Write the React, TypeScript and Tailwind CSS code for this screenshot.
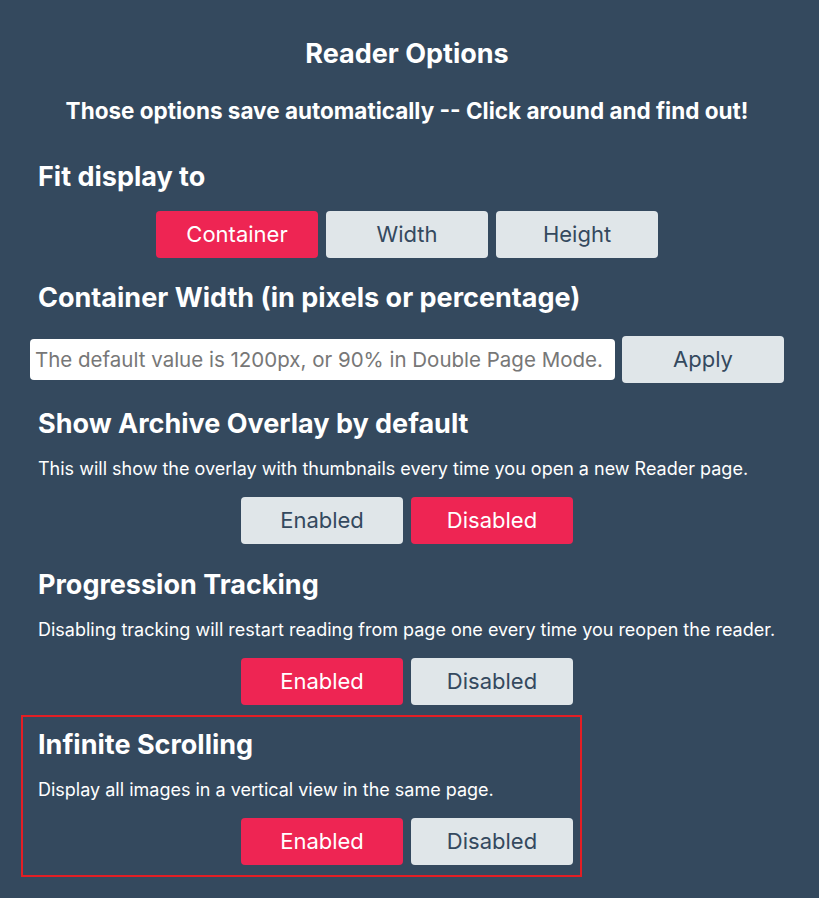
import React from "react";

const font = { fontFamily: "Inter, 'Noto Sans', sans-serif" };

function Toggle({ options, active }: { options: string[]; active: number }) {
  return (
    <div className="flex justify-center gap-2">
      {options.map((o, i) => (
        <button
          key={o}
          className={
            "h-[47px] w-[162px] rounded-[4px] text-[22px] " +
            (i === active ? "bg-[#ee2553] text-white" : "bg-[#e0e6e9] text-[#34495e]")
          }
        >
          {o}
        </button>
      ))}
    </div>
  );
}

function Section({
  title,
  desc,
  active,
}: {
  title: string;
  desc: string;
  active: number;
}) {
  return (
    <div>
      <h2 className="pl-[38px] text-[27px] font-bold leading-8 text-white">{title}</h2>
      <p className="mt-[17px] pl-[38px] text-[18px] leading-6 text-white">{desc}</p>
      <div className="mt-4">
        <Toggle options={["Enabled", "Disabled"]} active={active} />
      </div>
    </div>
  );
}

export default function App() {
  return (
    <div className="min-h-screen bg-[#34495e]" style={font}>
      <div className="w-[814px] pt-[38px] pb-[22px]">
        <h1 className="text-center text-[27px] font-bold leading-8 text-white">Reader Options</h1>
        <p className="mt-[27px] text-center text-[22.5px] font-bold leading-7 text-white">
          Those options save automatically -- Click around and find out!
        </p>

        <h2 className="mt-9 pl-[38px] text-[27px] font-bold leading-8 text-white">Fit display to</h2>
        <div className="mt-[18px]">
          <Toggle options={["Container", "Width", "Height"]} active={0} />
        </div>

        <h2 className="mt-6 pl-[38px] text-[27px] font-bold leading-8 text-white">
          Container Width (in pixels or percentage)
        </h2>
        <div className="mt-[22px] flex items-center justify-center gap-[7px]">
          <input
            className="h-[41px] w-[585px] rounded-[4px] bg-white px-[5px] text-[20.5px] text-[#34495e] placeholder:text-[#777] outline-none"
            placeholder="The default value is 1200px, or 90% in Double Page Mode."
          />
          <button className="h-[47px] w-[162px] rounded-[4px] bg-[#e0e6e9] text-[22px] text-[#34495e]">
            Apply
          </button>
        </div>

        <div className="mt-[25px]">
          <Section
            title="Show Archive Overlay by default"
            desc="This will show the overlay with thumbnails every time you open a new Reader page."
            active={1}
          />
        </div>

        <div className="mt-[25px]">
          <Section
            title="Progression Tracking"
            desc="Disabling tracking will restart reading from page one every time you reopen the reader."
            active={0}
          />
        </div>

        <div className="relative mt-[10px] pt-[14px] pb-3">
          <div className="pointer-events-none absolute inset-y-0 left-[21px] w-[561px] border-2 border-[#e31e24]" />
          <Section
            title="Infinite Scrolling"
            desc="Display all images in a vertical view in the same page."
            active={0}
          />
        </div>
      </div>
    </div>
  );
}
